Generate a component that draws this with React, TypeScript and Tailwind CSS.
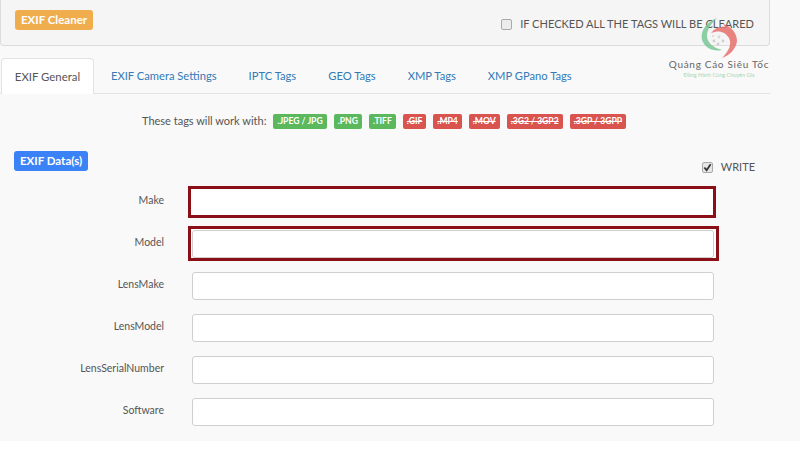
import React from "react";

const supported = [".JPEG / JPG", ".PNG", ".TIFF"];
const unsupported = [".GIF", ".MP4", ".MOV", ".3G2 / 3GP2", ".3GP / 3GPP"];
const tabs = ["EXIF Camera Settings", "IPTC Tags", "GEO Tags", "XMP Tags", "XMP GPano Tags"];
const fields = ["Make", "Model", "LensMake", "LensModel", "LensSerialNumber", "Software"];

function FieldRow({ label, index }: { label: string; index: number }) {
  const input = <div className="h-[28px] w-[522px] shrink-0 rounded-[3px] border border-[#cfcfcf] bg-white" />;
  return (
    <div className="flex h-[42px] items-center">
      <label className="mr-[28px] w-[164px] shrink-0 pb-[1px] text-right text-[10.5px] text-[#555]">{label}</label>
      {index === 0 && (
        <div className="-ml-[4px] h-[32px] w-[528px] border-[3px] border-[#8b0f17] bg-white" />
      )}
      {index === 1 && (
        <div className="-ml-[4px] flex h-[35px] w-[531px] items-center border-[3px] border-[#8b0f17] bg-white pl-[1px]">
          {input}
        </div>
      )}
      {index > 1 && input}
    </div>
  );
}

function Logo() {
  return (
    <div className="absolute left-[660px] top-[17px] flex w-[118px] flex-col items-center">
      <svg width="42" height="42" viewBox="0 0 42 42" className="opacity-85">
        <path d="M19 1 C8 5 2 15 4 23 C7 31 15 35 24 33 C16 31 9 26 9 19 C9 12 14 6 19 1Z" fill="#7cc795" />
        <path d="M13 16 C17 11 22 9 27 10 L25 7 C33 9 39 16 39 24 C38 32 32 38 24 41 C31 34 34 27 31 21 C27 14 20 13 13 16Z" fill="#e8706c" />
        <circle cx="16" cy="24" r="1.4" fill="#c9c9c9" />
        <circle cx="20" cy="27" r="1.4" fill="#c9c9c9" />
        <circle cx="25" cy="24" r="1.4" fill="#c9c9c9" />
        <circle cx="21" cy="20" r="1.4" fill="#d5d5d5" />
        <circle cx="15" cy="19" r="1.1" fill="#d5d5d5" />
      </svg>
      <span className="mt-[-1px] whitespace-nowrap text-[10px] leading-[12px] tracking-[0.7px] text-[#666]">Quảng Cáo Siêu Tốc</span>
      <span className="mt-[2px] whitespace-nowrap text-[5.5px] leading-[7px] text-[#a5d8b8]">Đồng Hành Cùng Chuyên Gia</span>
    </div>
  );
}

export default function App() {
  return (
    <div className="relative h-[455px] w-[800px] overflow-hidden bg-white font-['Lato',sans-serif]">
      <div className="h-[441px] bg-[#f9f9f9]">
        <div className="flex h-[46px] w-[770px] items-start justify-between rounded-br-[4px] rounded-bl-[4px] border-r border-b border-l border-[#dcdcdc] bg-[#f5f5f5] pt-[10px] pr-[15px] pl-[14px]">
          <span className="flex h-[20px] items-center rounded-[3px] bg-[#f0ad4e] px-[6px] text-[11.5px] font-bold text-white">EXIF Cleaner</span>
          <label className="mt-[6px] flex items-center text-[11.05px] text-[#555]">
            <span className="mr-[8px] h-[11px] w-[11px] rounded-[2px] border border-[#aaa] bg-[#ececec]" />
            IF CHECKED ALL THE TAGS WILL BE CLEARED
          </label>
        </div>

        <div className="mt-[12px] flex h-[36px] w-[770px] items-stretch border-b border-[#e3e3e3] text-[11.2px]">
          <div className="ml-[1px] -mb-px flex w-[93px] items-center justify-center rounded-t-[4px] border border-b-0 border-[#e3e3e3] bg-white text-[11.4px] text-[#555]">EXIF General</div>
          <div className="ml-[17px] flex gap-[32px] pt-[10px] text-[#337ab7]">
            {tabs.map(tab => (
              <span key={tab}>{tab}</span>
            ))}
          </div>
        </div>

        <div className="mt-[19px] flex h-[16px] items-center pl-[142px]">
          <span className="mr-[7px] text-[11px] text-[#555]">These tags will work with:</span>
          <div className="flex gap-[7px]">
            {supported.map(tag => (
              <span key={tag} className="flex h-[15px] items-center rounded-[2px] bg-[#5cb85c] px-[4px] text-[8.6px] font-bold text-white">{tag}</span>
            ))}
            {unsupported.map(tag => (
              <span key={tag} className="flex h-[15px] items-center rounded-[2px] bg-[#d9534f] px-[4px] text-[8.6px] font-bold text-white line-through">{tag}</span>
            ))}
          </div>
        </div>

        <div className="mt-[22px] flex items-start justify-between pr-[45px] pl-[14px]">
          <span className="flex h-[20px] items-center rounded-[3px] bg-[#3b82f6] px-[6px] text-[11.5px] font-bold text-white">EXIF Data(s)</span>
          <label className="mt-[8px] flex items-center text-[11px] text-[#555]">
            <span className="mr-[8px] flex h-[11px] w-[11px] items-center justify-center rounded-[2px] border border-[#aaa] bg-[#e6e6e6]">
              <svg width="9" height="9" viewBox="0 0 10 10">
                <path d="M1.5 5 L4 8 L8.5 1.5" fill="none" stroke="#333" strokeWidth="2" />
              </svg>
            </span>
            WRITE
          </label>
        </div>

        <div className="mt-[5px] flex flex-col">
          {fields.map((field, i) => (
            <FieldRow key={field} label={field} index={i} />
          ))}
        </div>
      </div>
      <Logo />
    </div>
  );
}
